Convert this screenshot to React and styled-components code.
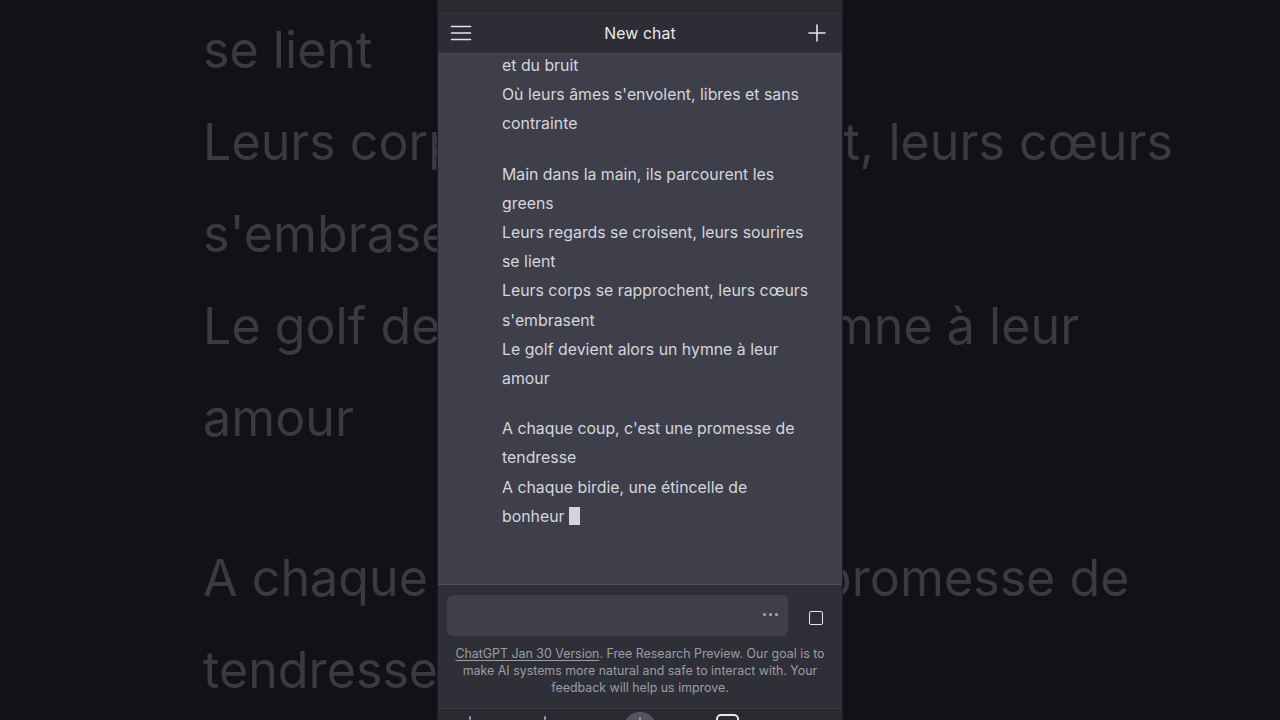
import React from "react";
import styled, { createGlobalStyle } from "styled-components";

const Global = createGlobalStyle`
  html, body { margin: 0; padding: 0; background: #111217; }
  body { font-family: "Inter", "Liberation Sans", sans-serif; }
  * { box-sizing: border-box; }
`;

const Page = styled.div`
  position: relative;
  width: 1280px;
  height: 720px;
  overflow: hidden;
  background: #111217;
  display: flex;
  justify-content: center;
`;

const Backdrop = styled.div`
  position: absolute;
  inset: 0;
  padding: 4px 0 0 203px;
  font-family: "Inter", "Liberation Sans", sans-serif;
  font-size: 50.2px;
  line-height: 92px;
  color: #3a3b40;
  filter: blur(0.7px);
  white-space: nowrap;
`;

const BackdropPara = styled.div`
  margin-bottom: ${(p) => p.$gap || 0}px;
`;

const Line = styled.div`
  white-space: nowrap;
`;

const Phone = styled.div`
  position: relative;
  z-index: 1;
  width: 404px;
  height: 720px;
  display: flex;
  flex-direction: column;
  background: #2f2f38;
  box-shadow: 0 0 0 1px #1c1d22;
`;

const StatusStrip = styled.div`
  height: 11px;
  flex: none;
  background: #2a2b30;
  border-bottom: 1px solid #22232a;
`;

const Header = styled.header`
  height: 43px;
  flex: none;
  display: flex;
  align-items: center;
  justify-content: space-between;
  padding: 1px 14px 0 12px;
  background: #2e2d36;
  border-bottom: 1px solid #4a4b55;
`;

const Title = styled.div`
  font-size: 15.8px;
  color: #e9e9ec;
  letter-spacing: 0.1px;
  margin: 2px 0 0 2px;
`;

const IconButton = styled.button`
  all: unset;
  display: flex;
  align-items: center;
  justify-content: center;
  width: 22px;
  height: 22px;
  color: #e4e4e8;
`;

const Messages = styled.main`
  flex: 1;
  min-height: 0;
  overflow: hidden;
  background: #3e3f4b;
  border-bottom: 1px solid #4c4d59;
`;

const Answer = styled.div`
  margin-top: -3px;
  padding-left: 64px;
  font-size: 15.85px;
  line-height: 29.2px;
  color: #d5d6dc;
`;

const Para = styled.div`
  margin-bottom: 21px;
`;

const Cursor = styled.span`
  display: inline-block;
  width: 11px;
  height: 18px;
  margin-left: 4px;
  vertical-align: -3px;
  background: #d2d3dc;
`;

const Composer = styled.section`
  flex: none;
  height: 123px;
  display: flex;
  flex-direction: column;
  padding: 10px 0 0;
  background: #2f2f38;
`;

const InputRow = styled.div`
  display: flex;
  align-items: center;
`;

const InputBox = styled.div`
  margin-left: 9px;
  width: 341px;
  height: 41px;
  border-radius: 6px;
  background: #3e3f4b;
  display: flex;
  align-items: center;
  justify-content: flex-end;
  padding-right: 10px;
`;

const Dots = styled.div`
  display: flex;
  gap: 3px;
  margin-top: -3px;
`;

const Dot = styled.span`
  width: 3px;
  height: 3px;
  border-radius: 50%;
  background: #a9aab4;
`;

const StopArea = styled.div`
  flex: 1;
  display: flex;
  justify-content: center;
  align-items: center;
  padding: 4px 0 0 1px;
`;

const StopIcon = styled.span`
  width: 14px;
  height: 14px;
  border: 1.6px solid #e6e6ea;
  border-radius: 2px;
`;

const Disclaimer = styled.p`
  margin: 9px 0 0;
  padding: 0 8px;
  text-align: center;
  font-size: 12.4px;
  line-height: 17px;
  color: #9c9da7;
`;

const VersionLink = styled.a`
  color: #9c9da7;
  text-decoration: underline;
  text-underline-offset: 2px;
`;

const BottomBar = styled.nav`
  flex: none;
  height: 12px;
  display: flex;
  align-items: flex-start;
  padding-top: 3px;
  overflow: hidden;
  background: #2a2b30;
  border-top: 1px solid #3b3c44;
`;

const BarSlot = styled.div`
  width: ${(p) => p.$w}px;
  display: flex;
  justify-content: center;
`;

const Tick = styled.span`
  width: 2px;
  height: 4px;
  border-radius: 1px;
  background: #9a9aa2;
  margin-top: ${(p) => p.$top || 2}px;
`;

const RoundIcon = styled.span`
  flex: none;
  width: 34px;
  height: 34px;
  border-radius: 50%;
  background: #55565d;
  display: flex;
  justify-content: center;
  padding-top: 3px;
`;

const TabsIcon = styled.span`
  flex: none;
  width: 23px;
  height: 20px;
  border: 2px solid #e8e8ec;
  border-radius: 5px;
  margin-top: 2px;
`;

const Hamburger = () => (
  <svg width="22" height="18" viewBox="0 0 22 18" fill="none">
    <g stroke="#e4e4e8" strokeWidth="1.6" strokeLinecap="round">
      <line x1="1.5" y1="2.5" x2="20.5" y2="2.5" />
      <line x1="1.5" y1="9" x2="20.5" y2="9" />
      <line x1="1.5" y1="15.5" x2="20.5" y2="15.5" />
    </g>
  </svg>
);

const Plus = () => (
  <svg width="18" height="18" viewBox="0 0 18 18" fill="none">
    <g stroke="#e4e4e8" strokeWidth="1.6" strokeLinecap="round">
      <line x1="9" y1="1" x2="9" y2="17" />
      <line x1="1" y1="9" x2="17" y2="9" />
    </g>
  </svg>
);

const answer = [
  ["et du bruit", "Où leurs âmes s'envolent, libres et sans", "contrainte"],
  [
    "Main dans la main, ils parcourent les",
    "greens",
    "Leurs regards se croisent, leurs sourires",
    "se lient",
    "Leurs corps se rapprochent, leurs cœurs",
    "s'embrasent",
    "Le golf devient alors un hymne à leur",
    "amour",
  ],
  [
    "A chaque coup, c'est une promesse de",
    "tendresse",
    "A chaque birdie, une étincelle de",
    "bonheur",
  ],
];

const backdrop = [
  [
    "se lient",
    "Leurs corps se rapprochent, leurs cœurs",
    "s'embrasent",
    "Le golf devient alors un hymne à leur",
    "amour",
  ],
  ["A chaque coup, c'est une promesse de", "tendresse"],
];

export default function App() {
  return (
    <>
      <Global />
      <Page>
        <Backdrop aria-hidden="true">
          {backdrop.map((para, i) => (
            <BackdropPara key={i} $gap={68}>
              {para.map((l) => (
                <Line key={l}>{l}</Line>
              ))}
            </BackdropPara>
          ))}
        </Backdrop>
        <Phone>
          <StatusStrip />
          <Header>
            <IconButton aria-label="Menu">
              <Hamburger />
            </IconButton>
            <Title>New chat</Title>
            <IconButton aria-label="New chat">
              <Plus />
            </IconButton>
          </Header>
          <Messages>
            <Answer>
              {answer.map((para, i) => (
                <Para key={i}>
                  {para.map((l, j) => (
                    <Line key={j}>
                      {l}
                      {i === answer.length - 1 && j === para.length - 1 && <Cursor />}
                    </Line>
                  ))}
                </Para>
              ))}
            </Answer>
          </Messages>
          <Composer>
            <InputRow>
              <InputBox>
                <Dots>
                  <Dot />
                  <Dot />
                  <Dot />
                </Dots>
              </InputBox>
              <StopArea>
                <StopIcon />
              </StopArea>
            </InputRow>
            <Disclaimer>
              <VersionLink>ChatGPT Jan 30 Version</VersionLink>. Free Research Preview. Our goal is to
              <br />
              make AI systems more natural and safe to interact with. Your
              <br />
              feedback will help us improve.
            </Disclaimer>
          </Composer>
          <BottomBar>
            <BarSlot $w={64}>
              <Tick $top={4} />
            </BarSlot>
            <BarSlot $w={86}>
              <Tick $top={4} />
            </BarSlot>
            <BarSlot $w={104}>
              <RoundIcon>
                <Tick $top={0} />
              </RoundIcon>
            </BarSlot>
            <BarSlot $w={70}>
              <TabsIcon />
            </BarSlot>
          </BottomBar>
        </Phone>
      </Page>
    </>
  );
}
